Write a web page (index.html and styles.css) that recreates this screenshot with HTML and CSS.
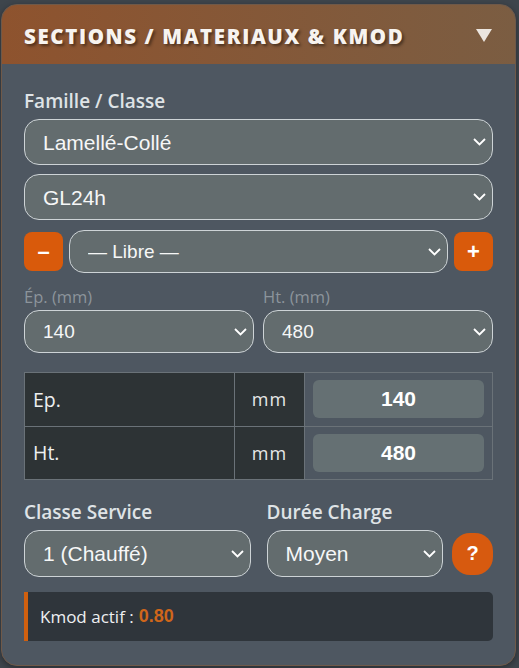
FILE: index.html
```html
<!DOCTYPE html>
<html lang="fr">
<head>
<meta charset="utf-8">
<title>Sections / Materiaux & Kmod</title>
<link rel="stylesheet" href="styles.css">
</head>
<body>
<section class="card">
  <header class="card-header">
    <h2 class="card-title">SECTIONS / MATERIAUX &amp; KMOD</h2>
    <svg class="toggle" width="16" height="13" viewBox="0 0 16 13"><polygon points="0,0 16,0 8,13" fill="#ece6e0"/></svg>
  </header>
  <div class="card-body">
    <label class="label">Famille / Classe</label>
    <div class="sel sel-lg">
      <select><option>Lamellé-Collé</option></select>
      <svg class="chev" width="13" height="8" viewBox="0 0 13 8"><polyline points="1,1 6.5,6.5 12,1" fill="none" stroke="#fff" stroke-width="1.8"/></svg>
    </div>
    <div class="sel sel-lg gap9">
      <select><option>GL24h</option></select>
      <svg class="chev" width="13" height="8" viewBox="0 0 13 8"><polyline points="1,1 6.5,6.5 12,1" fill="none" stroke="#fff" stroke-width="1.8"/></svg>
    </div>
    <div class="preset-row">
      <button class="sq-btn">&#8211;</button>
      <div class="sel sel-md grow">
        <select><option>— Libre —</option></select>
        <svg class="chev" width="13" height="8" viewBox="0 0 13 8"><polyline points="1,1 6.5,6.5 12,1" fill="none" stroke="#fff" stroke-width="1.8"/></svg>
      </div>
      <button class="sq-btn plus">+</button>
    </div>
    <div class="dim-grid">
      <div class="dim-col">
        <span class="sublabel">Ép. (mm)</span>
        <div class="sel sel-md">
          <select><option>140</option></select>
          <svg class="chev" width="13" height="8" viewBox="0 0 13 8"><polyline points="1,1 6.5,6.5 12,1" fill="none" stroke="#fff" stroke-width="1.8"/></svg>
        </div>
      </div>
      <div class="dim-col">
        <span class="sublabel">Ht. (mm)</span>
        <div class="sel sel-md">
          <select><option>480</option></select>
          <svg class="chev" width="13" height="8" viewBox="0 0 13 8"><polyline points="1,1 6.5,6.5 12,1" fill="none" stroke="#fff" stroke-width="1.8"/></svg>
        </div>
      </div>
    </div>
    <table class="dim-table">
      <tr>
        <td class="c-name">Ep.</td>
        <td class="c-unit">mm</td>
        <td class="c-val"><div class="val-box">140</div></td>
      </tr>
      <tr>
        <td class="c-name">Ht.</td>
        <td class="c-unit">mm</td>
        <td class="c-val"><div class="val-box">480</div></td>
      </tr>
    </table>
    <div class="service-grid">
      <div class="svc-col">
        <label class="label">Classe Service</label>
        <div class="sel sel-xl">
          <select><option>1 (Chauffé)</option></select>
          <svg class="chev" width="13" height="8" viewBox="0 0 13 8"><polyline points="1,1 6.5,6.5 12,1" fill="none" stroke="#fff" stroke-width="1.8"/></svg>
        </div>
      </div>
      <div class="svc-col">
        <label class="label">Durée Charge</label>
        <div class="svc-row">
          <div class="sel sel-xl grow">
            <select><option>Moyen</option></select>
            <svg class="chev" width="13" height="8" viewBox="0 0 13 8"><polyline points="1,1 6.5,6.5 12,1" fill="none" stroke="#fff" stroke-width="1.8"/></svg>
          </div>
          <button class="help-btn">?</button>
        </div>
      </div>
    </div>
    <div class="kmod">Kmod actif : <strong class="kmod-val">0.80</strong></div>
  </div>
</section>
</body>
</html>
```
FILE: styles.css
```css
html, body {
  margin: 0;
  background: #3e454c;
}
body {
  padding: 4px 3px 5px 1px;
  font-family: "Open Sans", "Liberation Sans", sans-serif;
  color: #eef0f2;
}
.card {
  border: 1px solid #6f5949;
  border-radius: 16px;
  overflow: hidden;
  background: #4e5761;
  box-shadow: 0 2px 6px rgba(0,0,0,0.35);
}
.card-header {
  height: 59px;
  background: linear-gradient(to right, #8e532e, #7b5d42);
  display: flex;
  align-items: center;
  justify-content: space-between;
  padding: 0 23px 0 22px;
}
.card-title {
  margin: 2px 0 0 0;
  font-family: "Open Sans", sans-serif;
  font-weight: 800;
  font-size: 20.5px;
  letter-spacing: 1.6px;
  color: #f7f3ef;
  text-shadow: 2px 2px 3px rgba(0,0,0,0.45);
}
.toggle {
  display: block;
  margin-top: 1px;
}
.card-body {
  padding: 25px 22px 24px 22px;
  display: flex;
  flex-direction: column;
}
.label {
  display: block;
  font-weight: 600;
  font-size: 19px;
  line-height: 24px;
  color: #dfe3e6;
}
.sel {
  position: relative;
}
.sel select {
  appearance: none;
  -webkit-appearance: none;
  width: 100%;
  box-sizing: border-box;
  margin: 0;
  background: #636c6e;
  border: 1px solid #cdd3d6;
  border-radius: 15px;
  color: #f6f7f7;
  font-family: "Liberation Sans", Arial, sans-serif;
  padding: 0 30px 0 18px;
  outline: none;
}
.sel-lg { margin-top: 6px; }
.sel-lg select { height: 46px; font-size: 21px; }
.sel-md select { height: 43px; font-size: 19px; }
.sel-xl select { height: 47px; font-size: 21px; }
.gap9 { margin-top: 9px; }
.chev {
  position: absolute;
  right: 7px;
  top: 50%;
  margin-top: -4px;
  pointer-events: none;
}
.grow { flex: 1; min-width: 0; }
.preset-row {
  margin-top: 10px;
  display: flex;
  align-items: center;
  gap: 6px;
}
.sq-btn {
  width: 39px;
  height: 39px;
  border: none;
  border-radius: 8px;
  background: #d95a0b;
  color: #fff;
  font-family: "Liberation Sans", Arial, sans-serif;
  font-weight: 700;
  font-size: 22px;
  line-height: 39px;
  padding: 0;
}
.dim-grid {
  margin-top: 13px;
  display: grid;
  grid-template-columns: 1fr 1fr;
  gap: 9px;
}
.dim-col {
  display: flex;
  flex-direction: column;
}
.sublabel {
  font-size: 16.5px;
  line-height: 21px;
  color: #8c949b;
  margin-bottom: 3px;
}
.dim-table {
  margin-top: 19px;
  width: 469px;
  border-collapse: collapse;
  table-layout: fixed;
}
.dim-table td {
  border: 1px solid #6a7278;
  height: 52.5px;
  padding: 0;
}
.c-name {
  width: 201px;
  background: #2d3335;
  padding-left: 8px !important;
  font-size: 19.5px;
  color: #eef0f0;
}
.c-unit {
  width: 69px;
  background: #2d3335;
  text-align: center;
  font-size: 18px;
  letter-spacing: 1px;
  color: #e6e8e8;
}
.c-val {
  background: #4e5761;
  padding: 0 8px !important;
}
.val-box {
  height: 38px;
  border-radius: 6px;
  background: #657073;
  color: #fff;
  font-family: "Liberation Sans", Arial, sans-serif;
  font-weight: 700;
  font-size: 21px;
  line-height: 38px;
  text-align: center;
}
.service-grid {
  margin-top: 20px;
  display: grid;
  grid-template-columns: 1fr 1fr;
  gap: 16px;
}
.svc-col {
  display: flex;
  flex-direction: column;
  gap: 6px;
}
.svc-row {
  display: flex;
  align-items: center;
  gap: 9px;
}
.help-btn {
  width: 41px;
  height: 42px;
  border: none;
  border-radius: 18px;
  background: #d75a0f;
  color: #fff;
  font-family: "Liberation Sans", Arial, sans-serif;
  font-weight: 700;
  font-size: 20px;
  padding: 0;
}
.kmod {
  margin-top: 15px;
  height: 49px;
  box-sizing: border-box;
  display: flex;
  align-items: center;
  gap: 5px;
  background: #2f353b;
  border-left: 4px solid #d0600f;
  border-radius: 0 5px 5px 0;
  padding-left: 12px;
  font-size: 17px;
  color: #eef0f2;
}
.kmod-val {
  color: #d0661a;
  font-family: "Liberation Sans", Arial, sans-serif;
  font-weight: 700;
  font-size: 18px;
}
```
